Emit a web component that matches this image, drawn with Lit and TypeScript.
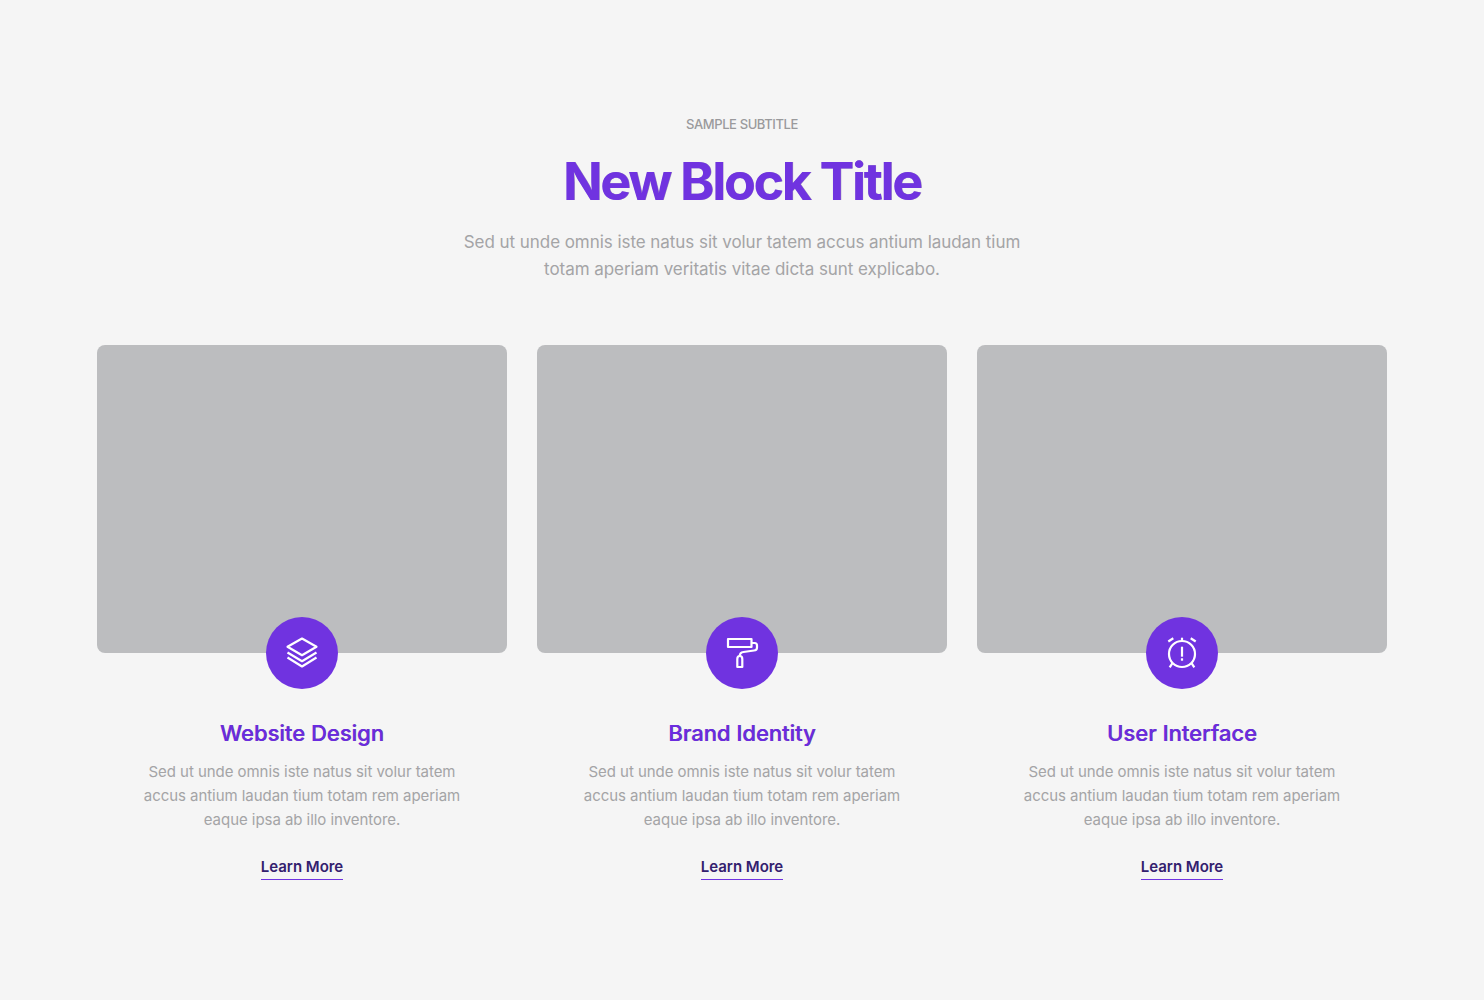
import { LitElement, css, html, svg } from 'lit';
import { customElement } from 'lit/decorators.js';

const ICONS = {
  layers: svg`
    <path d="M18 3.5 L32.5 11.7 L18 20.2 L3.5 11.7 Z" />
    <path d="M3.5 17.5 L18 26.2 L32.5 17.5" />
    <path d="M3.5 22.5 L18 31.5 L32.5 22.5" />
  `,
  roller: svg`
    <rect x="4" y="4" width="23.5" height="8" />
    <path d="M27.5 8 H30.5 Q33 8 33 10.5 V12.5 Q33 15.5 30 15.5 L19.5 17 Q15.8 17.5 15.8 21" />
    <path d="M13.3 32 V24 Q13.3 21 15.8 21 Q18.3 21 18.3 24 V32 Z" />
  `,
  alarm: svg`
    <circle cx="18" cy="19" r="13" />
    <path d="M18 11.7 V21.7" />
    <path d="M18 23.3 V25.7" />
    <path d="M4.3 6.5 L9.3 3.3" />
    <path d="M31.7 6.5 L26.7 3.3" />
    <path d="M18 2.7 V6" />
    <path d="M8.3 28.3 L5.7 32.3" />
    <path d="M27.7 28.3 L30.3 32.3" />
  `,
};

const CARDS = [
  { title: 'Website Design', icon: ICONS.layers },
  { title: 'Brand Identity', icon: ICONS.roller },
  { title: 'User Interface', icon: ICONS.alarm },
];

@customElement('app-root')
export class AppRoot extends LitElement {
  static styles = css`
    :host {
      display: block;
      min-height: 1000px;
      background: #f5f5f5;
      font-family: Inter, 'Liberation Sans', sans-serif;
      color: #a4a4a6;
    }

    .section {
      padding: 115px 97px 0;
    }

    .head {
      text-align: center;
    }

    .subtitle {
      font-size: 13px;
      line-height: 18px;
      font-weight: 500;
      letter-spacing: -0.4px;
      text-transform: uppercase;
      color: #9a9a9c;
    }

    h1 {
      margin: 19px 0 0;
      font-size: 52px;
      line-height: 60px;
      font-weight: 700;
      letter-spacing: -2.33px;
      color: #7033e0;
      text-shadow: 0.4px 0 0 rgba(50, 30, 110, 0.45);
    }

    .lead {
      margin: 17px 0 0;
      font-size: 17px;
      line-height: 27px;
      letter-spacing: -0.05px;
    }

    .cards {
      display: grid;
      grid-template-columns: repeat(3, 410px);
      gap: 30px;
      margin-top: 62px;
    }

    .card {
      display: flex;
      flex-direction: column;
      align-items: center;
      text-align: center;
    }

    .media {
      align-self: stretch;
      height: 308px;
      position: relative;
      background: #bcbdbf;
      border-radius: 8px;
    }

    .badge {
      position: absolute;
      left: 169px;
      top: 272px;
      width: 72px;
      height: 72px;
      border-radius: 50%;
      background: #7033e0;
      display: flex;
      align-items: center;
      justify-content: center;
    }

    .badge svg {
      width: 36px;
      height: 36px;
      fill: none;
      stroke: #fff;
      stroke-width: 2.2;
      stroke-linejoin: round;
    }

    h3 {
      margin: 65px 0 0;
      font-size: 22px;
      line-height: 30px;
      font-weight: 500;
      letter-spacing: 0;
      color: #6a2be0;
      text-shadow:
        0.4px 0 0 rgba(20, 20, 110, 0.6),
        -0.3px 0 0 rgba(150, 20, 90, 0.35);
    }

    .card p {
      margin: 12px 0 0;
      width: 340px;
      font-size: 15px;
      line-height: 24px;
      letter-spacing: -0.05px;
    }

    .more {
      margin-top: 24px;
      padding-bottom: 2px;
      border-bottom: 1px solid #7033e0;
      font-size: 15px;
      line-height: 21px;
      font-weight: 600;
      letter-spacing: -0.02px;
      color: #33206e;
      text-decoration: none;
    }
  `;

  render() {
    return html`
      <section class="section">
        <div class="head">
          <div class="subtitle">Sample subtitle</div>
          <h1>New Block Title</h1>
          <p class="lead">
            Sed ut unde omnis iste natus sit volur tatem accus antium laudan tium<br />
            totam aperiam veritatis vitae dicta sunt explicabo.
          </p>
        </div>
        <div class="cards">
          ${CARDS.map(
            (card) => html`
              <article class="card">
                <div class="media">
                  <div class="badge"><svg viewBox="0 0 36 36">${card.icon}</svg></div>
                </div>
                <h3>${card.title}</h3>
                <p>
                  Sed ut unde omnis iste natus sit volur tatem accus antium laudan tium totam rem
                  aperiam eaque ipsa ab illo inventore.
                </p>
                <a class="more" href="#">Learn More</a>
              </article>
            `,
          )}
        </div>
      </section>
    `;
  }
}
